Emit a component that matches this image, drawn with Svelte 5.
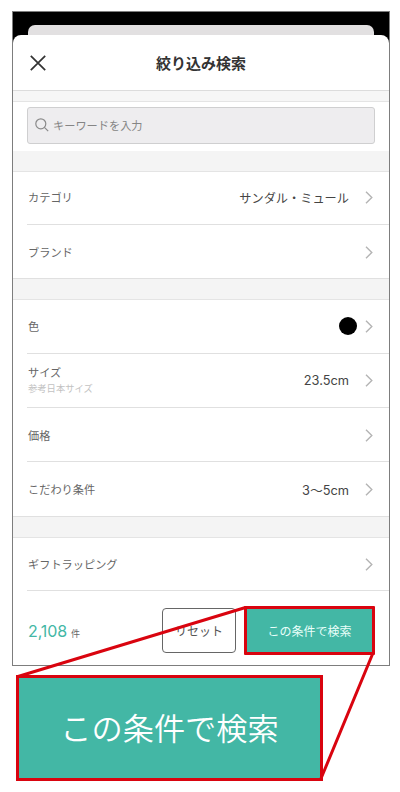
<script>
  const groups = [
    [
      { label: 'カテゴリ', value: 'サンダル・ミュール' },
      { label: 'ブランド' }
    ],
    [
      { label: '色', color: '#000' },
      { label: 'サイズ', note: '参考日本サイズ', value: '23.5cm' },
      { label: '価格' },
      { label: 'こだわり条件', value: '3〜5cm' }
    ],
    [{ label: 'ギフトラッピング' }]
  ];

  const count = 2108;
</script>

<main class="page">
  <section class="phone">
    <div class="backdrop">
      <div class="sheet-behind"></div>
    </div>

    <div class="sheet">
      <header class="header">
        <button class="close" aria-label="閉じる">
          <svg width="16" height="16" viewBox="0 0 16 16">
            <path d="M0.8 0.8 L15.2 15.2 M15.2 0.8 L0.8 15.2" />
          </svg>
        </button>
        <h1>絞り込み検索</h1>
      </header>

      <div class="search">
        <div class="search-box">
          <svg width="14" height="14" viewBox="0 0 14 14">
            <circle cx="5.8" cy="5.8" r="5" />
            <path d="M9.4 9.4 L13.2 13.2" />
          </svg>
          <span>キーワードを入力</span>
        </div>
      </div>

      {#each groups as rows}
        <ul class="group">
          {#each rows as row}
            <li class="row">
              <div class="label">
                <span>{row.label}</span>
                {#if row.note}
                  <small>{row.note}</small>
                {/if}
              </div>
              {#if row.value}
                <span class="value" class:latin={row.value.endsWith('cm')}>{row.value}</span>
              {/if}
              {#if row.color}
                <span class="dot" style="background: {row.color}"></span>
              {/if}
              <svg class="chevron" width="8" height="13" viewBox="0 0 8 13">
                <path d="M1 0.8 L6.8 6.5 L1 12.2" />
              </svg>
            </li>
          {/each}
        </ul>
      {/each}

      <footer class="footer">
        <p class="count">{count.toLocaleString('en-US')}<small>件</small></p>
        <button class="reset">リセット</button>
        <button class="submit">この条件で検索</button>
      </footer>
    </div>
  </section>

  <div class="callout">この条件で検索</div>

  <!-- lines from the small button to the enlarged one -->
  <svg class="lines" width="400" height="792" viewBox="0 0 400 792">
    <path d="M245.5 607.5 L18 676.5" />
    <path d="M373.2 652.5 L321 778.5" />
  </svg>
</main>

<style>
  :global(body) {
    margin: 0;
    background: #fff;
  }

  .page {
    position: relative;
    box-sizing: border-box;
    width: 400px;
    height: 792px;
    padding: 11px 0 0 12px;
    overflow: hidden;
    font-family: Inter, 'Noto Sans CJK JP', sans-serif;
    color: #444;
  }

  .phone {
    display: flex;
    flex-direction: column;
    box-sizing: border-box;
    width: 378px;
    height: 655px;
    border: 1px solid #7d7d7d;
    background: #000;
  }

  .backdrop {
    height: 23px;
    padding: 13px 15px 0;
    box-sizing: border-box;
  }

  .sheet-behind {
    height: 10px;
    border-radius: 7px 7px 0 0;
    background: #e2e0e1;
  }

  .sheet {
    display: flex;
    flex-direction: column;
    flex: 1;
    border-radius: 8px 8px 0 0;
    background: #fff;
  }

  button {
    padding: 0;
    border: 0;
    background: none;
    font: inherit;
    color: inherit;
  }

  svg {
    display: block;
    fill: none;
  }

  .header {
    display: grid;
    grid-template-columns: 50px 1fr 50px;
    align-items: center;
    height: 55px;
    border-bottom: 1px solid #dcdcdc;
  }

  .close {
    justify-self: start;
    margin-left: 17px;
  }

  .close svg {
    stroke: #333;
    stroke-width: 1.7;
  }

  h1 {
    margin: 0 0 1px;
    font-size: 15px;
    font-weight: 700;
    text-align: center;
    color: #333;
  }

  .search {
    box-sizing: border-box;
    height: 59.5px;
    padding: 6px 14px 6px;
    border-top: 10px solid #f6f6f6;
    box-shadow: inset 0 1px #e4e4e4;
  }

  .search-box {
    display: flex;
    align-items: center;
    gap: 4px;
    box-sizing: border-box;
    height: 37px;
    padding: 0 0 2px 7px;
    border: 1px solid #cfcfd0;
    border-radius: 3px;
    background: #eeedef;
    font-size: 11.2px;
    color: #858585;
  }

  .search-box svg {
    margin-top: 1px;
    stroke: #8a8a8a;
    stroke-width: 1.2;
  }

  .group {
    margin: 0;
    padding: 0;
    list-style: none;
    border-top: 20px solid #f4f4f4;
    box-shadow: inset 0 1px #e4e4e4;
  }

  .row {
    display: flex;
    align-items: center;
    box-sizing: border-box;
    height: 54.4px;
    margin-left: 14px;
    padding: 1px 16px 0 1px;
    border-bottom: 1px solid #e0e0e0;
  }

  .group:not(:last-of-type) .row:last-child {
    margin-left: 0;
    padding-left: 15px;
  }

  .label {
    display: flex;
    flex-direction: column;
    flex: 1;
    padding-top: 1px;
    font-size: 11.2px;
    line-height: 16px;
    color: #666;
  }

  .label small {
    font-size: 9.3px;
    color: #c2c2c2;
  }

  .value {
    font-size: 12.2px;
    color: #444;
  }

  .latin {
    font-size: 12.8px;
  }

  .dot {
    width: 18px;
    height: 18px;
    margin-right: -8px;
    border-radius: 50%;
  }

  .chevron {
    margin-left: 16px;
    stroke: #b4b4b4;
    stroke-width: 1.4;
  }

  .footer {
    display: flex;
    flex: 1;
    align-items: center;
    padding: 5px 15px 0;
  }

  .count {
    flex: 1;
    margin: 0;
    font-size: 16px;
    letter-spacing: -0.1px;
    color: #43b7a5;
  }

  .count small {
    margin-left: 4px;
    font-size: 9px;
    color: #666;
  }

  .reset,
  .submit {
    box-sizing: border-box;
    height: 45px;
    font-size: 12px;
  }

  .reset {
    width: 74px;
    margin-right: 8px;
    border: 1.5px solid #666;
    border-radius: 4px;
    color: #555;
  }

  .submit {
    width: 131px;
    height: 49px;
    margin-right: -1px;
    border: 3px solid #d9040f;
    border-radius: 1px;
    background: #43b7a5;
    color: #e9fffa;
  }

  .callout {
    display: flex;
    align-items: center;
    justify-content: center;
    box-sizing: border-box;
    width: 307px;
    height: 106px;
    margin: 9px 0 0 4px;
    padding: 0 0 3px;
    border: 3px solid #d9040f;
    background: #43b7a5;
    font-size: 31.2px;
    font-weight: 350;
    color: #fff;
  }

  .lines {
    position: absolute;
    top: 0;
    left: 0;
    stroke: #d9040f;
    stroke-width: 3;
    stroke-linecap: round;
    pointer-events: none;
  }
</style>
